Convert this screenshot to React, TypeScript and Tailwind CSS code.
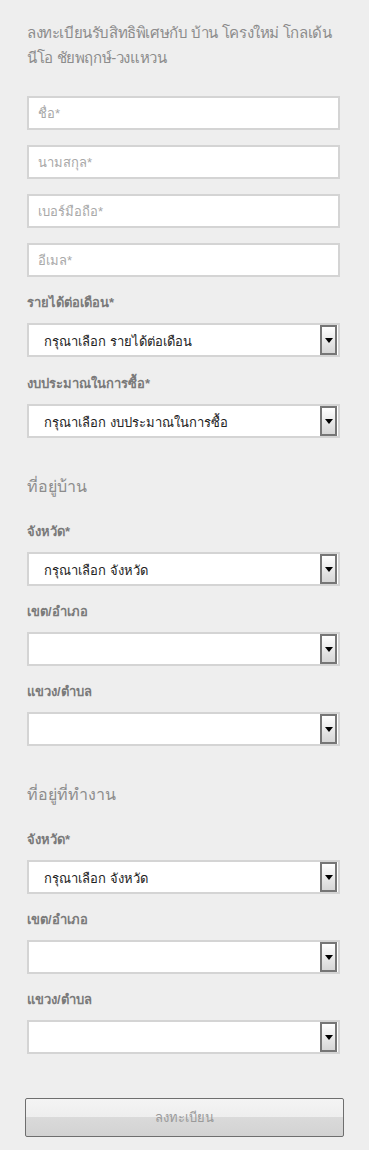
const FONT = "font-['Tahoma','Liberation_Sans','Noto_Sans',sans-serif]";

function TextField({ placeholder }: { placeholder: string }) {
  return (
    <input
      placeholder={placeholder}
      className="block h-[34px] w-full border-2 border-[#d4d4d4] bg-white px-[9px] text-[13px] text-[#333] outline-none placeholder:text-[#a8a8a8]"
    />
  );
}

function SelectBox({ value }: { value?: string }) {
  return (
    <div className="flex h-[34px] w-full items-stretch border-2 border-[#d4d4d4] bg-white py-0 pr-px">
      <div className="flex flex-1 items-center pl-[15px] pt-[3px] text-[13px] text-[#222]">
        {value ?? ""}
      </div>
      <div className="flex w-[17px] items-center justify-center border-2 border-[#767676] bg-gradient-to-b from-white to-[#d6d6d6]">
        <svg width="8" height="5" viewBox="0 0 8 5">
          <path d="M0 0h8L4 5z" fill="#000" />
        </svg>
      </div>
    </div>
  );
}

function Field({ label, value }: { label: string; value?: string }) {
  return (
    <div className="flex flex-col gap-[10px]">
      <div className="text-[13px] font-bold leading-[20px] text-[#7a7a7a]">{label}</div>
      <SelectBox value={value} />
    </div>
  );
}

export default function App() {
  return (
    <div className={`min-h-[1150px] w-[369px] bg-[#eeeeee] ${FONT}`}>
      <div className="flex flex-col pl-[27px] pr-[29px] pt-[20px]">
        <h1 className="-mr-[20px] text-[15px] font-normal leading-[25px] tracking-[-0.4px] text-[#8c8c8c]">
          ลงทะเบียนรับสิทธิพิเศษกับ บ้าน โครงใหม่ โกลเด้น นีโอ ชัยพฤกษ์-วงแหวน
        </h1>

        <div className="mt-[26px] flex flex-col gap-[15px]">
          <TextField placeholder="ชื่อ*" />
          <TextField placeholder="นามสกุล*" />
          <TextField placeholder="เบอร์มือถือ*" />
          <TextField placeholder="อีเมล*" />
        </div>

        <div className="mt-[16px] flex flex-col gap-[17px]">
          <Field label="รายได้ต่อเดือน*" value="กรุณาเลือก รายได้ต่อเดือน" />
          <Field label="งบประมาณในการซื้อ*" value="กรุณาเลือก งบประมาณในการซื้อ" />
        </div>

        <h2 className="mt-[36px] text-[16px] font-normal leading-[25px] text-[#8c8c8c]">ที่อยู่บ้าน</h2>
        <div className="mt-[23px] flex flex-col gap-[16px]">
          <Field label="จังหวัด*" value="กรุณาเลือก จังหวัด" />
          <Field label="เขต/อำเภอ" />
          <Field label="แขวง/ตำบล" />
        </div>

        <h2 className="mt-[36px] text-[16px] font-normal leading-[25px] text-[#8c8c8c]">ที่อยู่ที่ทำงาน</h2>
        <div className="mt-[23px] flex flex-col gap-[16px]">
          <Field label="จังหวัด*" value="กรุณาเลือก จังหวัด" />
          <Field label="เขต/อำเภอ" />
          <Field label="แขวง/ตำบล" />
        </div>
      </div>

      <div className="px-[25px] pt-[44px]">
        <button className="flex h-[39px] w-full items-center justify-center rounded-[2px] border border-[#6e6e6e] bg-[linear-gradient(to_bottom,#f4f4f4_0%,#eeeeee_48%,#dadada_50%,#d2d2d2_100%)] text-[13px] text-[#9a9a9a]">
          ลงทะเบียน
        </button>
      </div>
    </div>
  );
}
